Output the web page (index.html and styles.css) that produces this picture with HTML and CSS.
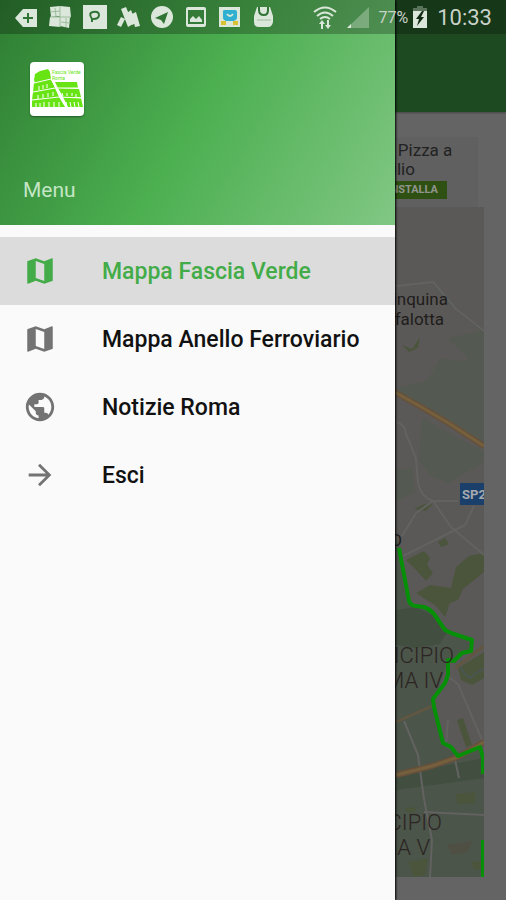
FILE: index.html
```html
<!DOCTYPE html>
<html lang="it">
<head>
    <meta charset="UTF-8">
    <meta name="viewport" content="width=device-width, initial-scale=1.0">
    <title>Fascia Verde Roma</title>
    <link rel="stylesheet" href="styles.css">
</head>
<body>
    <div class="screen">
        <main class="page">
            <div class="toolbar"></div>
            <div class="content">
                <div class="banner">
                    <p class="banner-text">Ordina Pizza a<br>Domicilio</p>
                    <button class="install" type="button">INSTALLA</button>
                </div>
                <svg class="map" viewBox="22 207 462 670" preserveAspectRatio="xMaxYMin slice" role="img" aria-label="Mappa">
                    <rect class="land" x="22" y="207" width="462" height="670"/>
                    <!-- fields and parks -->
                    <path class="field" d="M22 207H484V437L430 408L396 388V300L412 283L433 281L456 309L484 331V207Z"/>
                    <path class="land" d="M396 286L431 282L446 302L484 334L448 340L468 356L466 362L440 358L432 380L396 388Z"/>
                    <path class="field" d="M449 338L484 330V448L396 391L423 386L440 360L468 362L466 355Z"/>
                    <path class="field" d="M422 418L484 452V462L449 483L430 476L419 460Z"/>
                    <path class="field" d="M396 470L412 468L415 492L396 502Z"/>
                    <path class="zone" d="M22 540H398L409 604L430 608L446 628L471 640L470 652L448 662L433 704L442 744L458 756L481 747L484 760V877H22Z"/>
                    <path class="zone-dark" d="M396 610L415 607L435 616L447 632L440 644L416 648L396 645ZM396 775L484 758V778L396 790Z"/>
                    <path class="park" d="M406 560L424 551L430 558L427 565L433 573L426 581L418 572ZM416 593L430 585L451 588L456 567L469 556L484 553V572L463 589L458 600L450 603L445 617L436 606ZM438 542L445 538L449 544L441 547ZM414 509L425 504L433 503L426 511ZM402 345L412 349L420 337L418 348L409 352Z"/>
                    <path class="park" d="M458 668L484 652V678L472 685L461 680ZM457 720L463 718L472 745L466 747ZM456 794L475 792L475 803L457 804ZM408 862L428 858L425 875L414 877ZM472 862L484 861V869L474 870ZM406 807L416 808L414 813L405 811Z"/>
                    <path class="soil" d="M447 845L472 841L468 852L452 855Z"/>
                    <path class="water" d="M461 655Q458 672 470 678Q478 671 484 669"/>
                    <!-- streets -->
                    <path class="street" d="M396 422Q405 424 406 434Q412 447 416 459L418 483Q421 497 433 501H458M433 501L416 513L402 536M433 501L451 527L484 555M403 556L465 525L474 506M396 286L433 282L456 309L484 331M447 676L458 684L482 740M404 721L418 755L424 799M454 755L459 778M424 812L484 815M424 799L432 840L430 877M448 720L446 745"/>
                    <path class="road-edge" d="M388 388L398 394L423 408L450 424L484 446"/>
                    <path class="road" d="M388 388L398 394L423 408L450 424L484 446"/>
                    <path class="road-thin" d="M396 722L432 706M455 668L484 646"/>
                    <path class="road-edge" d="M396 775L432 766L458 757L484 742"/>
                    <path class="road" d="M396 775L432 766L458 757L484 742"/>
                    <!-- low emission zone border -->
                    <path class="border" d="M399 548L409 601Q411 606 416 606L424 607Q430 609 434 614L445 630L451 633L472 640L471 651L462 653L454 661L448 660V675L445 683L433 699L434 707L443 743L451 747L458 756L480 747L483 758V774M483 840V877"/>
                    <rect class="sign" x="460" y="483" width="34" height="22"/>
                    <text class="sign-text" x="462" y="499">SP2</text>
                    <g class="place" text-anchor="end">
                        <text x="448" y="305">Cinquina</text>
                        <text x="444" y="325">Bufalotta</text>
                        <text x="402" y="546">O</text>
                    </g>
                    <g class="district" text-anchor="end">
                        <text x="454" y="663">MUNICIPIO</text>
                        <text x="443" y="688">ROMA IV</text>
                        <text x="442" y="830">MUNICIPIO</text>
                        <text x="430" y="855">ROMA V</text>
                    </g>
                </svg>
            </div>
        </main>

        <aside class="drawer">
            <header class="drawer-header">
                <svg class="logo" viewBox="0 0 54 54" role="img" aria-label="Fascia Verde Roma">
                    <path class="logo-shape" d="M4 18L5 12L10 9L18 7L20 10L21 17L5 21ZM4 21L21 17L25 26L3 30ZM3 30L25 26L29 35L2 38ZM2 38L29 35L35 45H2ZM25 20H47L48 26L28 26ZM28 26L49 27L51 35L33 35ZM33 35L51 36L53 45H38Z"/>
                    <path class="logo-arch" d="M4 21L21 17M3 30L25 26M2 38L29 35L51 36M27 26H49"/>
                    <path class="logo-arch" d="M9 28V24M13 27V23M17 26V22M8 37V33M13 36V32M18 35V31M23 34V30M6 45V41M10 45V41M14 45V40M19 45V40M24 45V40M29 45V40M33 34L32 31M37 34V31M42 34V31M46 35V32M37 45L36 40M41 45L40 40M45 45L44 40M49 45L48 40"/>
                    <path class="logo-arch" d="M21 17L37 46"/>
                    <text class="logo-text" x="22" y="12">Fascia Verde</text>
                    <text class="logo-text" x="22" y="18">Roma</text>
                </svg>
                <h1 class="drawer-title">Menu</h1>
            </header>
            <nav class="menu">
                <a class="active" href="#fascia-verde">
                    <svg viewBox="0 0 24 24"><path d="M20.500 3l-.16.03L15 5.100 9 3 3.360 4.900c-.21.07-.36.25-.36.48V20.500c0 .28.22.5.5.5l.16-.03L9 18.900l6 2.100 5.640-1.900c.21-.07.36-.25.36-.48V3.500c0-.28-.22-.5-.5-.5zM15 19l-6-2.110V5l6 2.110V19z"/></svg>
                    <span>Mappa Fascia Verde</span>
                </a>
                <a href="#anello-ferroviario">
                    <svg viewBox="0 0 24 24"><path d="M20.500 3l-.16.03L15 5.100 9 3 3.360 4.900c-.21.07-.36.25-.36.48V20.500c0 .28.22.5.5.5l.16-.03L9 18.900l6 2.100 5.640-1.900c.21-.07.36-.25.36-.48V3.500c0-.28-.22-.5-.5-.5zM15 19l-6-2.110V5l6 2.110V19z"/></svg>
                    <span>Mappa Anello Ferroviario</span>
                </a>
                <a href="#notizie">
                    <svg viewBox="0 0 24 24"><path d="M12 2C6.480 2 2 6.480 2 12s4.480 10 10 10 10-4.480 10-10S17.520 2 12 2zm-1 17.930c-3.950-.49-7-3.850-7-7.930 0-.62.08-1.210.21-1.790L9 15v1c0 1.100.9 2 2 2v1.930zm6.900-2.540c-.26-.81-1-1.390-1.900-1.390h-1v-3c0-.55-.45-1-1-1H8v-2h2c.55 0 1-.45 1-1V7h2c1.100 0 2-.9 2-2v-.41c2.930 1.190 5 4.060 5 7.410 0 2.080-.8 3.970-2.100 5.390z"/></svg>
                    <span>Notizie Roma</span>
                </a>
                <a href="#esci">
                    <svg viewBox="0 0 24 24"><path d="M12 4l-1.410 1.410L16.170 11H4v2h12.170l-5.580 5.590L12 20l8-8z"/></svg>
                    <span>Esci</span>
                </a>
            </nav>
        </aside>

        <div class="status-bar">
            <svg viewBox="0 0 24 24"><path d="M8 4H22V22H8L0 13Z"/><path class="cut-line" d="M13 8V18M8 13H18"/></svg>
            <svg viewBox="0 0 24 24"><path d="M1 2L11 1V11L2 12ZM11 1L21 2L22 12H11ZM1 12H11V22L0 21ZM11 12H21L20 23L11 21Z"/><path class="crack" d="M1 7L11 6M6 3L7 11M11 1V22M1 12H22M12 17L21 18M17 13V22"/></svg>
            <svg viewBox="0 0 24 24"><path d="M0 0H24V24H0Z"/><path class="cut-line" d="M9 17V14Q5 8 10 7Q16 6 16 10Q16 14 10 14"/></svg>
            <svg viewBox="0 0 24 24"><path d="M0 20L4 12L8 14L4 22ZM4 4L9 2L16 19L11 22ZM10 8L14 5L19 18L15 20ZM15 9L19 7L23 21L18 22Z"/></svg>
            <svg viewBox="0 0 24 24"><circle cx="11" cy="12" r="11"/><path class="cut" d="M4 13L17 7L13 19L10 15Z"/></svg>
            <svg viewBox="0 0 24 24"><path fill-rule="evenodd" d="M3 2H19Q21 2 21 4V20Q21 22 19 22H3Q1 22 1 20V4Q1 2 3 2ZM3 5V19H19V5Z"/><path d="M5 17V14L8 11L11 14L14 11L17 15V17Z"/></svg>
            <svg viewBox="0 0 24 24"><path d="M0 2H21V22H0Z"/><path class="waze-wheel" d="M2 16H7V20H2ZM14 16H19V20H14Z"/><path class="waze" d="M4 6Q4 5 6 5H16Q18 5 18 7V13Q17 16 14 16H7Q4 15 4 13Z"/><path class="waze-smile" d="M8 9Q11 13 14 9"/></svg>
            <svg viewBox="0 0 24 24"><path d="M4 2H17Q19 8 20 11V17Q19 22 15 22H6Q1 22 1 17V11Q2 8 4 2Z"/><path class="cut-line" d="M6 2V5Q6 10 11 10Q15 10 15 5V2"/><path class="crack" d="M4 15H18"/></svg>
            <div class="status-right">
                <svg viewBox="0 0 24 24"><path class="wave" d="M1 7Q12 -2 23 7M4 11Q12 4 20 11M7 14Q12 10 17 14"/><path d="M9 15L12 19H10V24H8V19H6ZM15 24L12 20H14V15H16V20H18Z"/></svg>
                <svg viewBox="0 0 24 24"><path class="faint" d="M1 23L23 2V23Z"/><path d="M1 23L5 19V23Z"/></svg>
                <div class="power">
                    <span class="percent">77%</span>
                    <svg class="battery" viewBox="0 0 16 24"><path class="faint" d="M5 1H11V3H15V7H1V3H5Z"/><path d="M1 6H15V23H1Z"/><path class="bolt" d="M10 6L4 14H7L5 21L12 12H9L12 6Z"/></svg>
                </div>
                <time class="clock">10:33</time>
            </div>
        </div>
    </div>
</body>
</html>
```
FILE: styles.css
```css
body {
    font-family: Roboto, "Liberation Sans", sans-serif;
    margin: 0;
    background-color: #646464;
}

.screen {
    position: relative;
    min-height: 100vh;
    overflow: hidden;
    display: flex;
}

/* Page behind the drawer, already dimmed */
.page {
    flex: 1;
    display: flex;
    flex-direction: column;
    background-color: #646464;
}

.toolbar {
    height: 112px;
    background-color: #1e4a21;
    box-shadow: 0 1px 2px rgba(0, 0, 0, 0.3);
}

.content {
    flex: 1;
    display: flex;
    flex-direction: column;
    padding: 25px 22px 23px;
}

.banner {
    box-sizing: border-box;
    height: 70px;
    margin-right: 6px;
    padding: 4px 31px 0 0;
    background-color: #606060;
    display: flex;
    flex-direction: column;
    align-items: flex-end;
}

.banner-text {
    margin: 0;
    width: 103px;
    font-size: 17px;
    line-height: 19px;
    white-space: nowrap;
    color: #222;
}

.install {
    height: 18px;
    margin-top: 2px;
    padding: 0 9px;
    border: none;
    background-color: #2f5013;
    color: #8f948c;
    font-family: inherit;
    font-size: 11px;
    font-weight: 700;
    line-height: 18px;
}

.map {
    flex: 1;
    width: 100%;
    min-height: 0;
    display: block;
}

.land { fill: #5b5957; }
.field { fill: #545a51; }
.zone { fill: #4b554a; }
.zone-dark { fill: #424f40; }
.park { fill: #4b553c; }
.soil { fill: #504f44; }

.water, .street, .road, .road-edge, .road-thin, .border {
    fill: none;
    stroke-linejoin: round;
}

.water { stroke: #48566c; stroke-width: 1; }
.street { stroke: #626260; stroke-width: 2; }
.road-edge { stroke: #67503c; stroke-width: 6; }
.road { stroke: #74603c; stroke-width: 3; }
.road-thin { stroke: #605641; stroke-width: 3; }
.border { stroke: #069008; stroke-width: 4; }
.sign { fill: #1b3f6b; }

.sign-text {
    font-size: 13px;
    font-weight: 700;
    fill: #a5a9ae;
}

.place {
    font-size: 17px;
    fill: #1f1d1c;
}

.district {
    font-size: 22px;
    font-weight: 300;
    fill: #2c2422;
}

/* Drawer */
.drawer {
    position: absolute;
    top: 0;
    bottom: 0;
    left: 0;
    width: 78%;
    background-color: #fafafa;
    box-shadow: 1px 0 2px #000;
}

.drawer-header {
    box-sizing: border-box;
    height: 225px;
    padding: 62px 23px 0;
    background: linear-gradient(120deg, #2e7d32, #4caf50 50%, #81c784);
}

.logo {
    display: block;
    width: 54px;
    height: 54px;
    margin-left: 7px;
    border-radius: 4px;
    background-color: #fff;
    box-shadow: 0 1px 2px rgba(0, 0, 0, 0.4);
}

.logo-shape { fill: #68e414; }
.logo-arch { fill: none; stroke: #fff; stroke-width: 1; }

.logo-text {
    font-size: 5px;
    fill: #68e414;
}

.drawer-title {
    margin: 62px 0 0;
    font-size: 21px;
    font-weight: 400;
    line-height: 24px;
    color: #c4e6c5;
}

.menu {
    padding-top: 12px;
}

.menu a {
    display: flex;
    align-items: center;
    gap: 45px;
    height: 68px;
    padding-left: 23px;
    font-size: 23px;
    font-weight: 500;
    color: #111;
    text-decoration: none;
    white-space: nowrap;
}

.menu svg {
    flex: none;
    width: 34px;
    height: 34px;
    fill: #737373;
}

.menu .active {
    background-color: #dcdcdc;
    color: #43ac48;
}

.menu .active svg {
    fill: #43ac48;
}

/* Status bar lies over both the drawer and the page */
.status-bar {
    position: absolute;
    top: 0;
    left: 0;
    right: 0;
    box-sizing: border-box;
    height: 34px;
    padding: 0 14px 0 15px;
    display: flex;
    align-items: center;
    gap: 10px;
    background-color: rgba(0, 0, 0, 0.25);
}

.status-bar svg {
    flex: none;
    width: 24px;
    height: 24px;
    fill: #dbe7da;
}

.status-right {
    margin-left: auto;
    display: flex;
    align-items: center;
    gap: 9px;
    color: #c8d2c8;
}

.power {
    display: flex;
    align-items: center;
    gap: 4px;
}

.status-bar .battery { width: 16px; }
.status-bar .cut { fill: #2f7434; }
.status-bar .cut-line { fill: none; stroke: #2f7434; stroke-width: 2; }
.status-bar .crack { fill: none; stroke: #9dbd9d; stroke-width: 1; }
.status-bar .wave { fill: none; stroke: #dbe7da; stroke-width: 2; }
.status-bar .faint { fill: rgba(219, 231, 218, 0.35); }
.status-bar .bolt { fill: #122b14; }
.status-bar .waze { fill: #2fb0d0; }
.status-bar .waze-wheel { fill: #d8c234; }
.status-bar .waze-smile { fill: none; stroke: #dbe7da; stroke-width: 2; }

.percent {
    font-size: 16px;
}

.clock {
    font-size: 22px;
}
```
